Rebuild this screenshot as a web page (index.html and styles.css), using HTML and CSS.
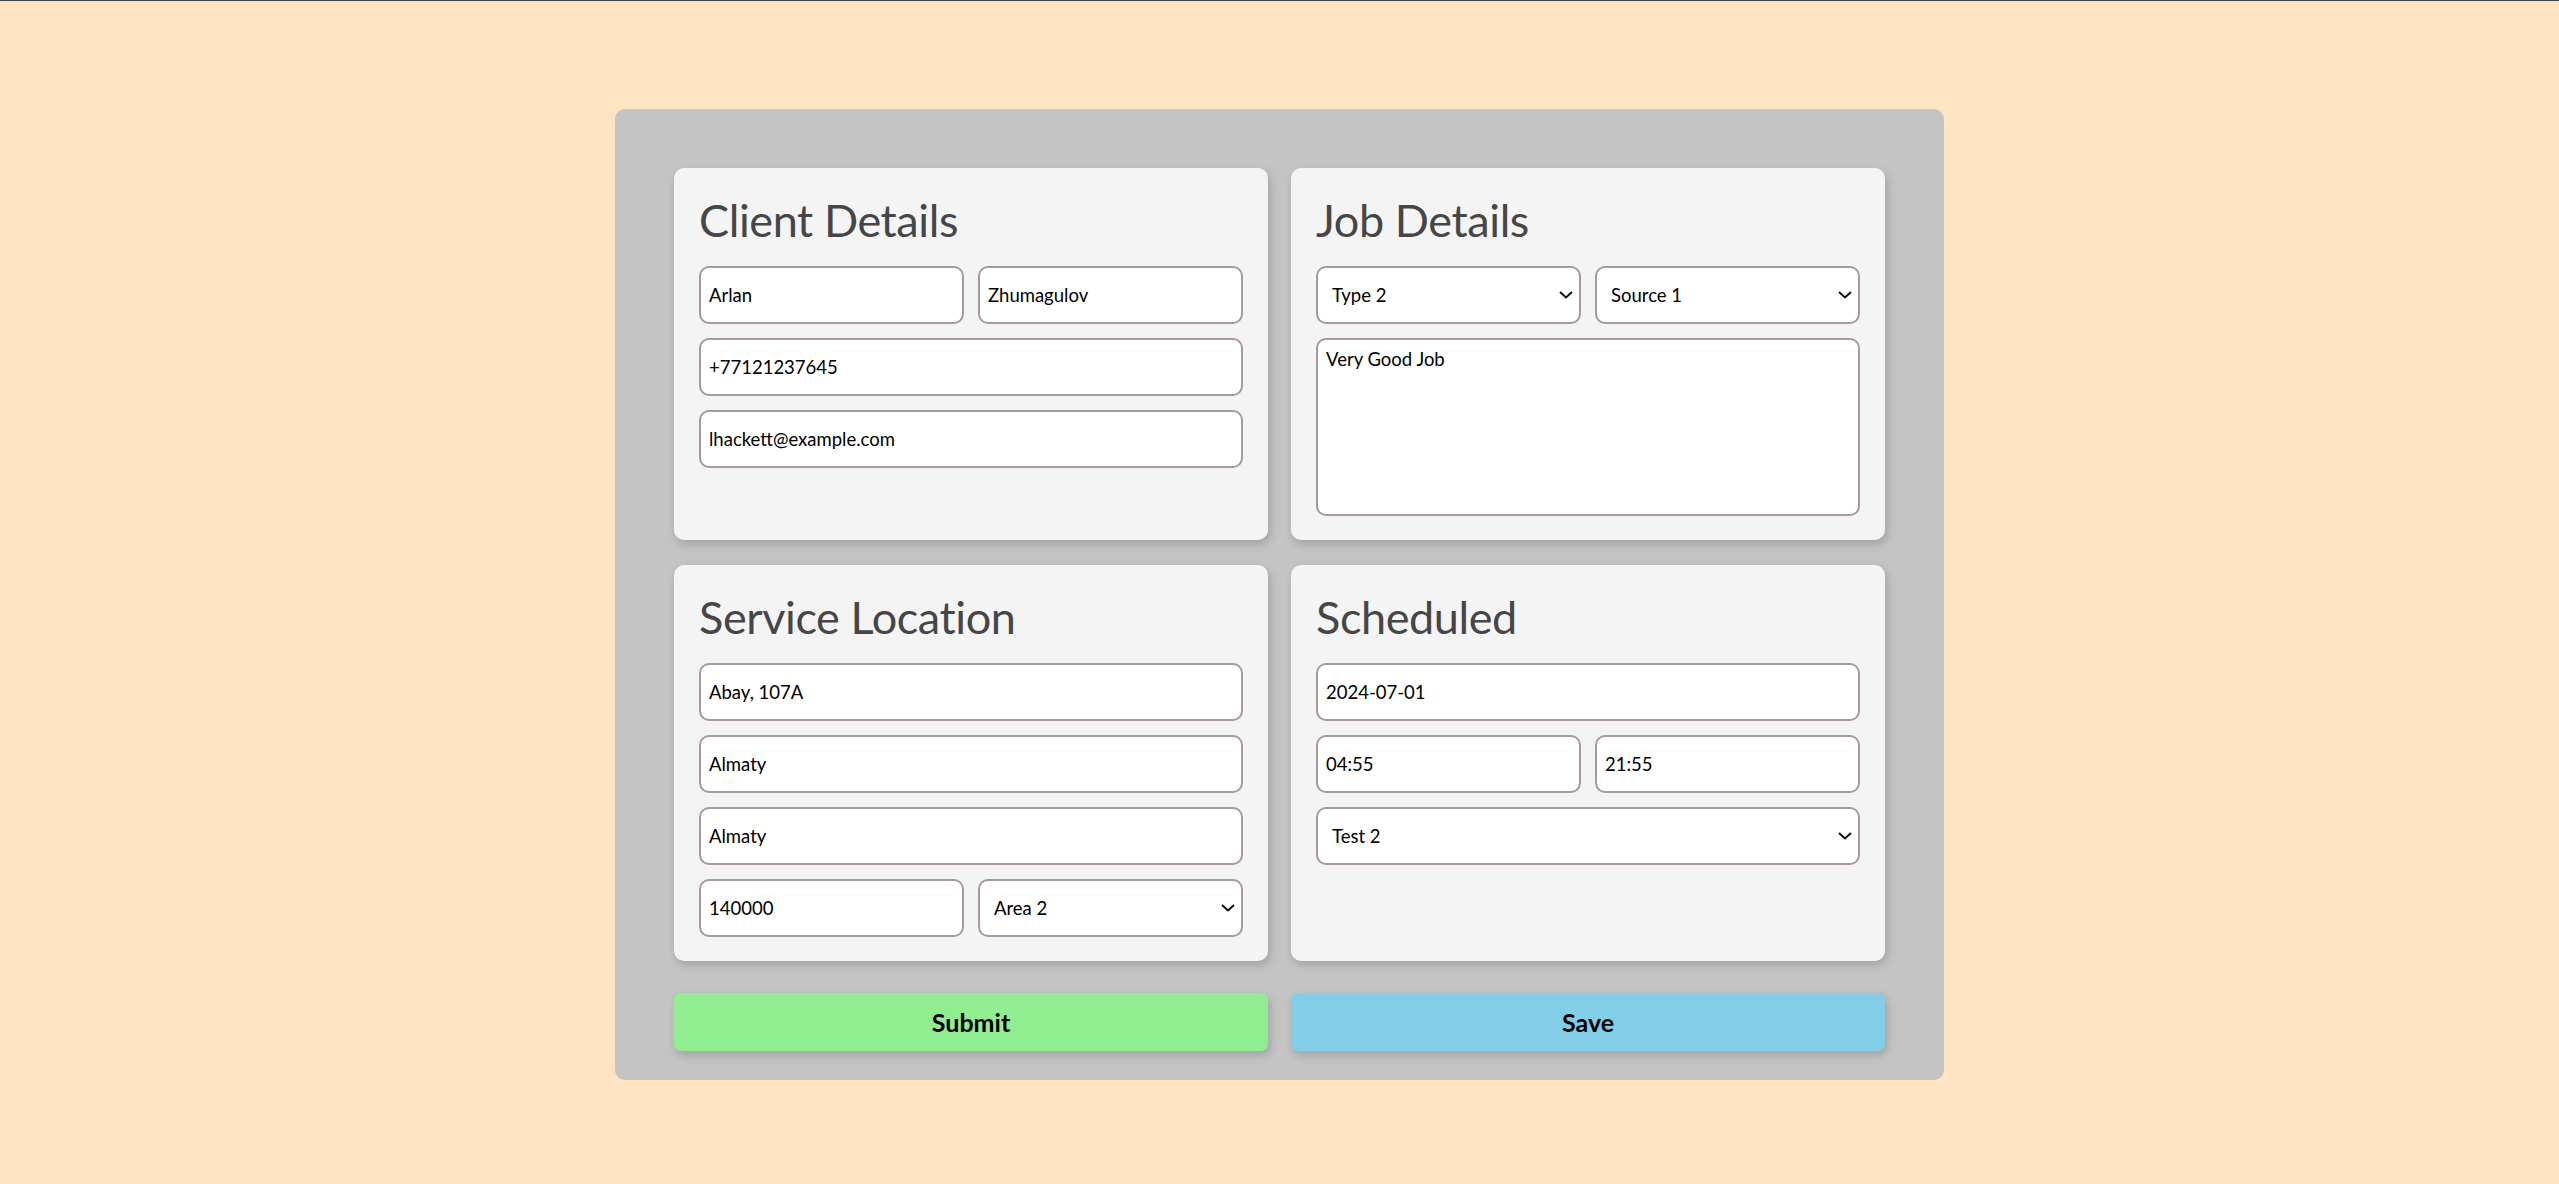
FILE: index.html
```html
<!DOCTYPE html>
<html lang="en">
<head>
    <meta charset="UTF-8">
    <meta name="viewport" content="width=device-width, initial-scale=1.0">
    <title>New Job</title>
    <link rel="stylesheet" href="styles.css">
</head>
<body>
    <form class="job-form">
        <div class="cards">
            <section class="card">
                <h2>Client Details</h2>
                <div class="row two">
                    <input type="text" value="Arlan">
                    <input type="text" value="Zhumagulov">
                </div>
                <input type="tel" value="+77121237645">
                <input type="email" value="lhackett@example.com">
            </section>

            <section class="card">
                <h2>Job Details</h2>
                <div class="row two">
                    <label class="select-wrap">
                        <select>
                            <option>Type 1</option>
                            <option selected>Type 2</option>
                        </select>
                        <svg class="chevron" viewBox="0 0 14 8"><path d="M1 1l6 5.5L13 1"/></svg>
                    </label>
                    <label class="select-wrap">
                        <select>
                            <option selected>Source 1</option>
                            <option>Source 2</option>
                        </select>
                        <svg class="chevron" viewBox="0 0 14 8"><path d="M1 1l6 5.5L13 1"/></svg>
                    </label>
                </div>
                <textarea>Very Good Job</textarea>
            </section>

            <section class="card">
                <h2>Service Location</h2>
                <input type="text" value="Abay, 107A">
                <input type="text" value="Almaty">
                <input type="text" value="Almaty">
                <div class="row two">
                    <input type="text" value="140000">
                    <label class="select-wrap">
                        <select>
                            <option>Area 1</option>
                            <option selected>Area 2</option>
                        </select>
                        <svg class="chevron" viewBox="0 0 14 8"><path d="M1 1l6 5.5L13 1"/></svg>
                    </label>
                </div>
            </section>

            <section class="card">
                <h2>Scheduled</h2>
                <input type="text" value="2024-07-01">
                <div class="row two">
                    <input type="text" value="04:55">
                    <input type="text" value="21:55">
                </div>
                <label class="select-wrap">
                    <select>
                        <option>Test 1</option>
                        <option selected>Test 2</option>
                    </select>
                    <svg class="chevron" viewBox="0 0 14 8"><path d="M1 1l6 5.5L13 1"/></svg>
                </label>
            </section>
        </div>

        <div class="actions">
            <button type="submit" class="submit">Submit</button>
            <button type="button" class="save">Save</button>
        </div>
    </form>
</body>
</html>
```

FILE: styles.css
```css
html {
    border-top: 1px solid #3b4049;
}
body {
    font-family: Lato, 'Open Sans', Arial, sans-serif;
    background-color: bisque;
    margin: 0;
    padding-top: 108px;
}
.job-form {
    width: 1329px;
    margin: 0 auto;
    box-sizing: border-box;
    padding: 59px 59px 29px;
    background-color: #c4c4c4;
    border-radius: 10px;
}
.cards {
    display: grid;
    grid-template-columns: 1fr 1fr;
    column-gap: 23px;
    row-gap: 25px;
}
.card {
    display: flex;
    flex-direction: column;
    gap: 14px;
    padding: 24px 25px;
    background-color: #f4f4f4;
    border-radius: 10px;
    box-shadow: 2px 4px 10px rgba(0,0,0,0.18);
}
.card h2 {
    margin: 0 0 4px;
    font-size: 45px;
    line-height: 56px;
    font-weight: normal;
    color: #464646;
    letter-spacing: -0.4px;
}
.row.two {
    display: grid;
    grid-template-columns: 1fr 1fr;
    gap: 14px;
}
input, select, textarea {
    box-sizing: border-box;
    width: 100%;
    height: 58px;
    margin: 0;
    padding: 0 8px;
    font-family: inherit;
    font-size: 18.5px;
    color: #000;
    background-color: #fff;
    border: 2px solid #a89a9a;
    border-radius: 10px;
    outline: none;
}
.select-wrap {
    position: relative;
    display: block;
}
select {
    appearance: none;
    -webkit-appearance: none;
    padding: 0 40px 0 14px;
}
.chevron {
    position: absolute;
    right: 8px;
    top: 25px;
    width: 14px;
    height: 8px;
    fill: none;
    stroke: #111;
    stroke-width: 2;
    pointer-events: none;
}
textarea {
    height: 178px;
    padding: 8px;
    resize: none;
}
.actions {
    display: grid;
    grid-template-columns: 1fr 1fr;
    column-gap: 23px;
    margin-top: 32px;
}
.actions button {
    height: 58px;
    border: none;
    border-radius: 7px;
    font-family: inherit;
    font-size: 25px;
    font-weight: bold;
    color: #000;
    cursor: pointer;
    box-shadow: 2px 4px 10px rgba(0,0,0,0.18);
}
.submit {
    background-color: lightgreen;
}
.save {
    background-color: #82cde8;
}
```
